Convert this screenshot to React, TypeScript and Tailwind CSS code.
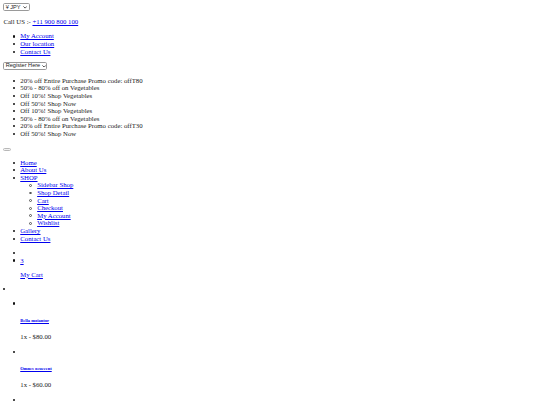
const topLinks = ["My Account", "Our location", "Contact Us"];

const promos = [
  "20% off Entire Purchase Promo code: offT80",
  "50% - 80% off on Vegetables",
  "Off 10%! Shop Vegetables",
  "Off 50%! Shop Now",
  "Off 10%! Shop Vegetables",
  "50% - 80% off on Vegetables",
  "20% off Entire Purchase Promo code: offT30",
  "Off 50%! Shop Now",
];

const shopLinks = ["Sidebar Shop", "Shop Detail", "Cart", "Checkout", "My Account", "Wishlist"];

const cartItems = [
  { name: "Bella moiantor", price: "1x - $80.00" },
  { name: "Omnes ocuccent", price: "1x - $60.00" },
];

const link = "text-[#0000ee] underline";

const dot =
  "relative before:absolute before:left-[-18px] before:top-[7px] before:h-[5px] before:w-[5px] before:rounded-full before:bg-[#111] before:content-['']";
const ring =
  "relative before:absolute before:left-[-19px] before:top-[6px] before:h-[7px] before:w-[7px] before:rounded-full before:border-2 before:border-[#555] before:content-['']";

function FakeSelect({ label, width }: { label: string; width: string }) {
  return (
    <span
      className={`inline-flex h-[19px] items-center justify-between gap-1 whitespace-nowrap rounded-[4px] border-2 border-[#9a9a9a] bg-white pl-[3px] pr-[4px] align-bottom font-['Liberation_Sans',sans-serif] text-[13.33px] leading-none text-[#222] ${width}`}
    >
      {label}
      <svg viewBox="0 0 10 6" className="h-[6px] w-[10px] shrink-0" fill="none" stroke="#333" strokeWidth="2">
        <path d="M1 1l4 4 4-4" />
      </svg>
    </span>
  );
}

export default function App() {
  return (
    <div className="min-h-[405px] overflow-hidden bg-white text-[#1a1a1a]">
      {/* page was captured at 1280 wide, scaled down to the 540 window */}
      <div className="[zoom:0.421875] p-2 font-['Liberation_Serif',serif] text-base leading-[18px]">
        <div>
          <FakeSelect label="¥ JPY" width="w-[62px]" />
        </div>

        <p className="my-4">
          Call US :- <a href="#" className={link}>+11 900 800 100</a>
        </p>

        <ul className="my-4 pl-10">
          {topLinks.map((t) => (
            <li key={t} className={dot}>
              <a href="#" className={link}>{t}</a>
            </li>
          ))}
        </ul>

        <div>
          <FakeSelect label="Register Here" width="w-[104px]" />
        </div>

        <ul className="my-4 pl-10">
          {promos.map((p, i) => (
            <li key={i} className={dot}>{p}</li>
          ))}
        </ul>

        <div className="my-4">
          <button className="inline-block h-[7px] w-[17px] rounded-[4px] border-2 border-[#b8b8b8] bg-[#f2f2f2] align-baseline" />
        </div>

        <ul className="my-4 pl-10">
          <li className={dot}><a href="#" className={link}>Home</a></li>
          <li className={dot}><a href="#" className={link}>About Us</a></li>
          <li className={dot}>
            <a href="#" className={link}>SHOP</a>
            <ul className="pl-10">
              {shopLinks.map((s) => (
                <li key={s} className={ring}>
                  <a href="#" className={link}>{s}</a>
                </li>
              ))}
            </ul>
          </li>
          <li className={dot}><a href="#" className={link}>Gallery</a></li>
          <li className={dot}><a href="#" className={link}>Contact Us</a></li>
        </ul>

        <ul className="my-4 pl-10">
          <li className={dot}>
            <span className="inline-block" />
          </li>
          <li className={dot}>
            <a href="#" className={link}>3</a>
            <p className="my-4">
              <a href="#" className={link}>My Cart</a>
            </p>
          </li>
        </ul>

        <ul className="my-4 pl-4">
          <li className={dot}>
            <span className="inline-block" />
            <ul className="my-4 pl-6">
              {cartItems.map((c) => (
                <li key={c.name} className={dot}>
                  <span className="inline-block" />
                  <h6 className="my-[25px] text-[10.72px] font-bold leading-[normal]">
                    <a href="#" className={link}>{c.name}</a>
                  </h6>
                  <p className="my-4">{c.price}</p>
                </li>
              ))}
              <li className={dot}>
                <span className="inline-block" />
              </li>
            </ul>
          </li>
        </ul>
      </div>
    </div>
  );
}
